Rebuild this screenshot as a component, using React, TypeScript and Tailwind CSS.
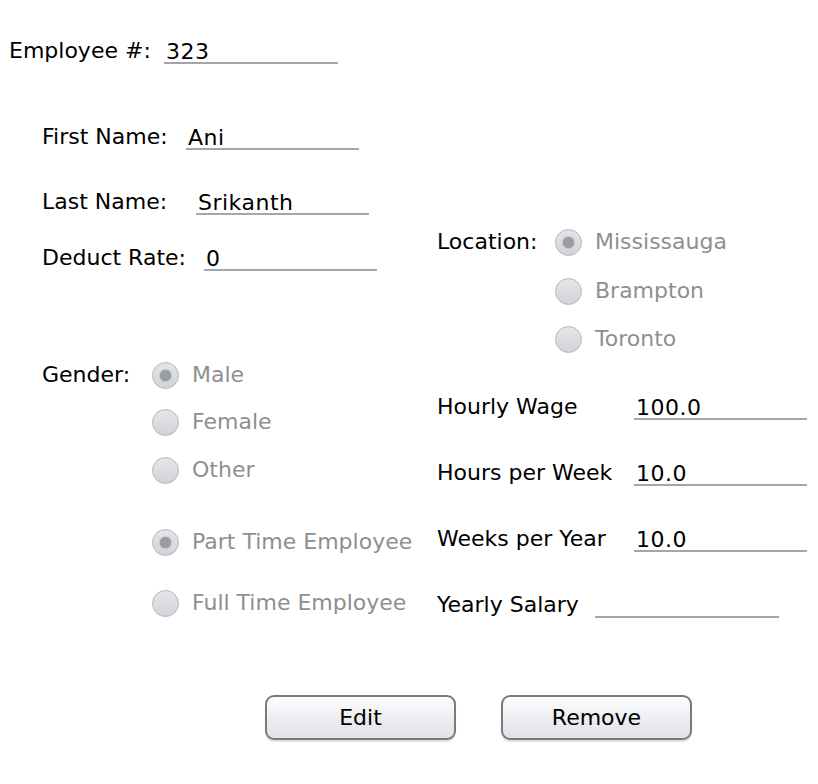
const LABEL = "text-black whitespace-pre";
const DISABLED = "text-[#8f8f8f] whitespace-pre";

const Field = ({ value, className }: { value?: string; className: string }) => (
  <div
    className={`h-[26px] border-b-2 border-[#a3a6ad] pl-[2px] pt-[3px] flex items-center tracking-[0.5px] ${className}`}
  >
    {value}
  </div>
);

const Radio = ({ label, checked }: { label: string; checked?: boolean }) => (
  <div className="flex items-center">
    <div className="w-[27px] h-[27px] rounded-full border border-[#b4b6bc] bg-linear-to-b from-[#e4e5e8] to-[#d2d4d9] flex items-center justify-center">
      {checked && (
        <div className="w-[11px] h-[11px] rounded-full bg-[#9a9ca3] shadow-[0_0_2px_#8f9198]" />
      )}
    </div>
    <span className={`ml-[13px] ${DISABLED}`}>{label}</span>
  </div>
);

const Button = ({ label }: { label: string }) => (
  <button className="w-[191px] h-[45px] rounded-[9px] border-2 border-[#777a7f] bg-linear-to-b from-[#fefefe] via-[#eceef1] to-[#e0e2e7] shadow-[0_2px_1px_rgba(0,0,0,0.12)] text-black flex items-center justify-center">
    {label}
  </button>
);

export default function App() {
  return (
    <div className="w-[818px] h-[784px] bg-white text-[22px] leading-[26px] font-['DejaVu_Sans',sans-serif]">
      {/* employee number */}
      <div className="pt-[36px] pl-[9px]">
        <div className="h-[30px] flex items-center">
          <span className={`w-[155px] ${LABEL}`}>Employee #:</span>
          <Field value="323" className="w-[174px]" />
        </div>
      </div>

      <div className="flex">
        {/* left column */}
        <div className="w-[437px] pl-[42px] flex flex-col">
          <div className="mt-[56px] h-[30px] flex items-center">
            <span className={`w-[144px] ${LABEL}`}>First Name:</span>
            <Field value="Ani" className="w-[173px]" />
          </div>
          <div className="mt-[35px] h-[30px] flex items-center">
            <span className={`w-[154px] ${LABEL}`}>Last Name:</span>
            <Field value="Srikanth" className="w-[173px]" />
          </div>
          <div className="mt-[26px] h-[30px] flex items-center">
            <span className={`w-[162px] ${LABEL}`}>Deduct Rate:</span>
            <Field value="0" className="w-[173px]" />
          </div>

          <div className="mt-[87px] h-[30px] flex items-center">
            <span className={`w-[110px] ${LABEL}`}>Gender:</span>
            <Radio label="Male" checked />
          </div>
          <div className="mt-[17px] h-[30px] flex items-center pl-[110px]">
            <Radio label="Female" />
          </div>
          <div className="mt-[18px] h-[30px] flex items-center pl-[110px]">
            <Radio label="Other" />
          </div>

          <div className="mt-[42px] h-[30px] flex items-center pl-[110px]">
            <Radio label="Part Time Employee" checked />
          </div>
          <div className="mt-[31px] h-[30px] flex items-center pl-[110px]">
            <Radio label="Full Time Employee" />
          </div>
        </div>

        {/* right column */}
        <div className="flex-1 flex flex-col">
          <div className="mt-[161px] h-[30px] flex items-center">
            <span className={`w-[118px] ${LABEL}`}>Location:</span>
            <Radio label="Mississauga" checked />
          </div>
          <div className="mt-[19px] h-[30px] flex items-center pl-[118px]">
            <Radio label="Brampton" />
          </div>
          <div className="mt-[18px] h-[30px] flex items-center pl-[118px]">
            <Radio label="Toronto" />
          </div>

          <div className="mt-[38px] h-[30px] flex items-center">
            <span className={`w-[197px] ${LABEL}`}>Hourly Wage</span>
            <Field value="100.0" className="w-[173px]" />
          </div>
          <div className="mt-[36px] h-[30px] flex items-center">
            <span className={`w-[197px] ${LABEL}`}>Hours per Week</span>
            <Field value="10.0" className="w-[173px]" />
          </div>
          <div className="mt-[36px] h-[30px] flex items-center">
            <span className={`w-[197px] ${LABEL}`}>Weeks per Year</span>
            <Field value="10.0" className="w-[173px]" />
          </div>
          <div className="mt-[36px] h-[30px] flex items-center">
            <span className={`w-[158px] ${LABEL}`}>Yearly Salary</span>
            <Field className="w-[184px]" />
          </div>
        </div>
      </div>

      {/* buttons */}
      <div className="mt-[75px] pl-[265px] flex gap-[45px]">
        <Button label="Edit" />
        <Button label="Remove" />
      </div>
    </div>
  );
}
